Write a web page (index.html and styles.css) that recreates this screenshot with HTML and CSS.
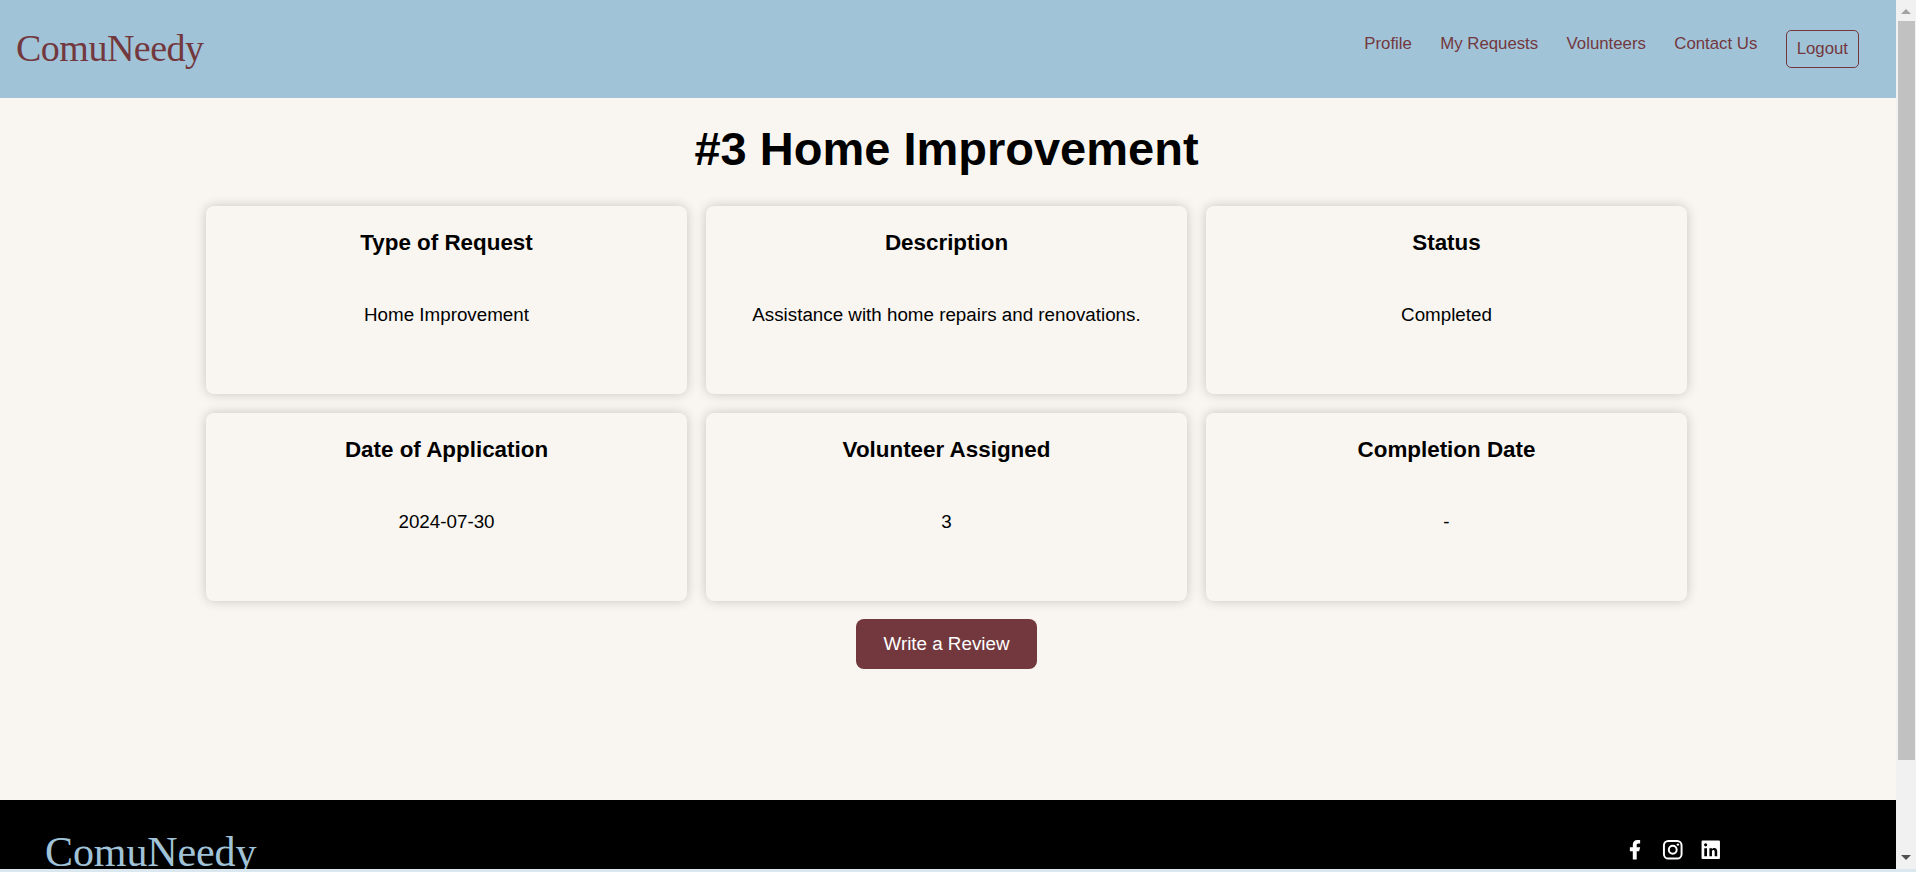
FILE: index.html
```html
<!DOCTYPE html>
<html lang="en">
<head>
<meta charset="utf-8">
<title>ComuNeedy</title>
<link rel="stylesheet" href="styles.css">
</head>
<body>
<div class="window">
  <div class="page">
    <header class="header">
      <a class="logo">ComuNeedy</a>
      <nav class="nav">
        <a>Profile</a>
        <a>My Requests</a>
        <a>Volunteers</a>
        <a>Contact Us</a>
        <a class="logout">Logout</a>
      </nav>
    </header>
    <main class="main">
      <h1 class="title">#3 Home Improvement</h1>
      <section class="cards">
        <article class="card"><h3>Type of Request</h3><p>Home Improvement</p></article>
        <article class="card"><h3>Description</h3><p>Assistance with home repairs and renovations.</p></article>
        <article class="card"><h3>Status</h3><p>Completed</p></article>
        <article class="card"><h3>Date of Application</h3><p>2024-07-30</p></article>
        <article class="card"><h3>Volunteer Assigned</h3><p>3</p></article>
        <article class="card"><h3>Completion Date</h3><p>-</p></article>
      </section>
      <button class="review">Write a Review</button>
    </main>
    <footer class="footer">
      <div class="footer-logo">ComuNeedy</div>
      <div class="social">
        <svg viewBox="0 0 24 24"><path d="M14 13.5h2.500l1-4H14v-2c0-1.030 0-2 2-2h1.500V2.140C17.174 2.097 15.943 2 14.643 2 11.928 2 10 3.657 10 6.700v2.800H7v4h3V22h4z"/></svg>
        <svg viewBox="0 0 24 24"><rect class="line" x="3" y="3" width="18" height="18" rx="4.500"/><circle class="line" cx="12" cy="12" r="4"/><circle cx="17.250" cy="6.750" r="1.250"/></svg>
        <svg viewBox="0.500 0.500 23 23"><path fill-rule="evenodd" d="M4 3h16a1 1 0 0 1 1 1v16a1 1 0 0 1-1 1H4a1 1 0 0 1-1-1V4a1 1 0 0 1 1-1zM18.340 18.340v-4.670c0-2.290-1.240-3.360-2.890-3.360-1.330 0-1.930.730-2.260 1.250v-1.070h-2.510v7.850h2.510v-4.380c0-1.160.640-1.620 1.330-1.620.840 0 1.310.570 1.310 1.620v4.380zM5.450 7.200a1.550 1.550 0 1 0 3.100 0a1.550 1.550 0 1 0-3.100 0zM5.670 10.490v7.850h2.670v-7.850z"/></svg>
      </div>
    </footer>
  </div>
  <aside class="scrollbar">
    <svg class="arrow" viewBox="0 0 20 21"><path fill="#a3a3a3" d="M10 9l5 5H5z"/></svg>
    <div class="thumb"></div>
    <svg class="arrow down" viewBox="0 0 20 21"><path fill="#505050" d="M5 7h10l-5 5z"/></svg>
  </aside>
</div>
</body>
</html>
```
FILE: styles.css
```css
* { box-sizing: border-box; }
body {
  margin: 0;
  height: 872px;
  overflow: hidden;
  background: #dce8f0;
  font-family: "Liberation Sans", Arial, sans-serif;
  color: #000;
}
.window { display: flex; height: 869px; overflow: hidden; }
.page { width: 1896px; display: flex; flex-direction: column; background: #f9f6f1; }
.header {
  height: 98px;
  flex: none;
  display: flex;
  justify-content: space-between;
  align-items: flex-start;
  padding: 24px 37px 0 16px;
  background: #a1c3d8;
  color: #72383d;
}
.logo, .footer-logo { font-family: "Liberation Serif", "Times New Roman", serif; line-height: 48px; white-space: nowrap; }
.logo { font-size: 38px; letter-spacing: -.5px; }
.nav { display: flex; align-items: flex-start; gap: 28.400px; padding-top: 6px; font-size: 16.800px; line-height: 28px; }
.logout { height: 38px; padding: 4px 10px; border: 1px solid #72383d; border-radius: 5px; }
.main { height: 702px; flex: none; display: flex; flex-direction: column; align-items: center; padding-right: 3px; }
.title { margin: 23px 0 29px; font-size: 47px; line-height: 56px; }
.cards { display: grid; grid-template-columns: repeat(3, 481px); grid-auto-rows: 188px; gap: 19px; }
.card { border-radius: 8px; padding-top: 19px; text-align: center; background: #f9f6f1; box-shadow: 0 0 12px rgba(0, 0, 0, .2); }
.card h3 { margin: 0; font-size: 22.400px; line-height: 36px; }
.card p { margin: 40px 0 0; font-size: 18.800px; line-height: 28px; }
.review { width: 181px; height: 50px; margin-top: 18px; border: 0; border-radius: 8px; background: #72383d; color: #fff; font: 18.800px "Liberation Sans", Arial, sans-serif; }
.footer { flex: 1; display: flex; justify-content: space-between; align-items: flex-start; padding: 28px 174px 0 45px; background: #000; overflow: hidden; }
.footer-logo { color: #a1c3d8; font-size: 42px; letter-spacing: -.1px; }
.social { display: flex; gap: 14px; padding-top: 10px; }
.social svg { width: 23.500px; height: 23.500px; fill: #fff; }
.social svg:first-child { margin-right: 1px; }
.social .line { fill: none; stroke: #fff; stroke-width: 2; }
.scrollbar { width: 20px; display: flex; flex-direction: column; align-items: center; background: #f1f1f1; }
.arrow { width: 20px; height: 21px; }
.thumb { width: 17px; height: 739px; background: #c1c1c1; }
.down { margin-top: auto; }
```
